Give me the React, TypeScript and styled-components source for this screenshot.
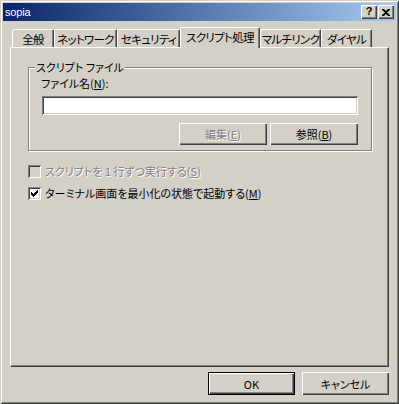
import styled, { createGlobalStyle } from "styled-components"

const GlobalStyle = createGlobalStyle`
  html, body {
    margin: 0;
    padding: 0;
    background: #d4d0c8;
  }
  body {
    font-family: "Noto Sans CJK JP", "Noto Sans", sans-serif;
    font-size: 11px;
    font-feature-settings: "palt";
    color: #000;
  }
  * {
    box-sizing: border-box;
  }
`

const tabs = [
  { label: "全般", width: 42 },
  { label: "ネットワーク", width: 63 },
  { label: "セキュリティ", width: 63 },
  { label: "スクリプト処理", width: 80, active: true },
  { label: "マルチリンク", width: 61 },
  { label: "ダイヤル", width: 51 },
]

const App = () => {
  return (
    <>
      <GlobalStyle />
      <Window>
        <TitleBar>
          <TitleText>sopia</TitleText>
          <TitleButtons>
            <CaptionButton>
              <HelpMark>?</HelpMark>
            </CaptionButton>
            <CaptionButton>
              <svg width="8" height="7" viewBox="0 0 8 7">
                <path d="M0 0h2l2 2 2-2h2v1L5 3.5 8 6v1H6L4 5 2 7H0V6l3-2.5L0 1z" fill="#000" />
              </svg>
            </CaptionButton>
          </TitleButtons>
        </TitleBar>

        <Body>
          <TabStrip>
            {tabs.map((tab) => (
              <Tab key={tab.label} $active={!!tab.active} $width={tab.width}>
                {tab.label}
              </Tab>
            ))}
          </TabStrip>

          <Panel>
            <GroupBox>
              <GroupLegend>スクリプト ファイル</GroupLegend>
              <FieldLabel>
                ファイル名(<U>N</U>):
              </FieldLabel>
              <TextInput />
              <GroupButtons>
                <Button $disabled $width={88}>
                  編集(<U>E</U>)
                </Button>
                <Button $width={88}>
                  参照(<U>B</U>)
                </Button>
              </GroupButtons>
            </GroupBox>

            <Checks>
              <CheckRow $disabled>
                <CheckBox $disabled />
                <span>
                  スクリプトを 1 行ずつ実行する(<U>S</U>)
                </span>
              </CheckRow>
              <CheckRow>
                <CheckBox>
                  <svg width="7" height="7" viewBox="0 0 7 7">
                    <path d="M0 2h1v1h1v1h1V3h1V2h1V1h1V0h1v3H6v1H5v1H4v1H3v1H2V6H1V5H0z" fill="#000" />
                  </svg>
                </CheckBox>
                <span>
                  ターミナル画面を最小化の状態で起動する(<U>M</U>)
                </span>
              </CheckRow>
            </Checks>
          </Panel>

          <Footer>
            <Button $default $width={87} $height={23}>
              OK
            </Button>
            <Button $width={87} $height={23}>
              キャンセル
            </Button>
          </Footer>
        </Body>
      </Window>
    </>
  )
}

export default App

const Window = styled.div`
  width: 399px;
  height: 404px;
  padding: 3px;
  display: flex;
  flex-direction: column;
  background: #d4d0c8;
  box-shadow: inset 1px 1px 0 #d4d0c8, inset -1px -1px 0 #404040, inset 2px 2px 0 #fff,
    inset -2px -2px 0 #808080;
`

const TitleBar = styled.div`
  height: 18px;
  display: flex;
  align-items: center;
  justify-content: space-between;
  padding: 0 2px 0 2px;
  background: linear-gradient(to right, #0a246a, #a6caf0);
`

const TitleText = styled.div`
  font-family: "Liberation Sans", Arial, sans-serif;
  font-size: 11px;
  color: #fff;
  letter-spacing: -0.2px;
`

const TitleButtons = styled.div`
  display: flex;
  gap: 1px;
`

const CaptionButton = styled.div`
  width: 16px;
  height: 14px;
  display: flex;
  align-items: center;
  justify-content: center;
  background: #d4d0c8;
  box-shadow: inset 1px 1px 0 #fff, inset -1px -1px 0 #404040, inset -2px -2px 0 #808080;
`

const HelpMark = styled.span`
  font-family: "Liberation Sans", Arial, sans-serif;
  font-weight: bold;
  font-size: 11px;
  line-height: 11px;
  margin-top: -1px;
`

const Body = styled.div`
  flex: 1;
  display: flex;
  flex-direction: column;
  padding: 6px 7px 0;
`

const TabStrip = styled.div`
  height: 20px;
  display: flex;
  align-items: flex-end;
  padding-left: 2px;
  position: relative;
  z-index: 1;
`

const Tab = styled.div<{ $active: boolean; $width: number }>`
  width: ${(p) => p.$width}px;
  height: ${(p) => (p.$active ? 21 : 18)}px;
  margin-bottom: ${(p) => (p.$active ? -1 : 0)}px;
  display: flex;
  align-items: ${(p) => (p.$active ? "flex-start" : "center")};
  justify-content: center;
  padding-top: ${(p) => (p.$active ? 1 : 0)}px;
  background: #d4d0c8;
  border-left: 1px solid #fff;
  border-top: 1px solid #fff;
  border-right: 1px solid #404040;
  border-top-left-radius: 2px;
  border-top-right-radius: 2px;
  box-shadow: inset -1px 0 0 #808080;
  font-size: 11.5px;
  letter-spacing: -0.7px;
  line-height: 16px;
  white-space: nowrap;
`

const Panel = styled.div`
  height: 320px;
  padding: 19px 17px 0 17px;
  border-left: 1px solid #fff;
  border-top: 1px solid #fff;
  border-right: 1px solid #404040;
  border-bottom: 1px solid #404040;
  box-shadow: inset -1px -1px 0 #808080;
`

const GroupBox = styled.div`
  position: relative;
  width: 344px;
  padding: 9px 13px 5px 12px;
  border: 1px solid #808080;
  box-shadow: 1px 1px 0 #fff, inset 1px 1px 0 #fff;
`

const GroupLegend = styled.div`
  position: absolute;
  top: -8px;
  left: 6px;
  padding: 0 1px;
  line-height: 14px;
  background: #d4d0c8;
  white-space: nowrap;
`

const FieldLabel = styled.div`
  line-height: 13px;
  margin-bottom: 6px;
`

const U = styled.span`
  text-decoration: underline;
  text-underline-offset: 1px;
`

const TextInput = styled.div`
  margin-left: 1px;
  height: 19px;
  background: #fff;
  box-shadow: inset 1px 1px 0 #808080, inset -1px -1px 0 #fff, inset 2px 2px 0 #404040,
    inset -2px -2px 0 #d4d0c8;
`

const GroupButtons = styled.div`
  display: flex;
  justify-content: flex-end;
  gap: 3px;
  margin-top: 8px;
`

const Button = styled.div<{ $disabled?: boolean; $default?: boolean; $width: number; $height?: number }>`
  width: ${(p) => p.$width}px;
  height: ${(p) => p.$height ?? 22}px;
  display: flex;
  align-items: center;
  justify-content: center;
  background: #d4d0c8;
  line-height: 14px;
  color: ${(p) => (p.$disabled ? "#808080" : "#000")};
  text-shadow: ${(p) => (p.$disabled ? "1px 1px 0 #fff" : "none")};
  border: ${(p) => (p.$default ? "1px solid #000" : "none")};
  box-shadow: inset 1px 1px 0 #fff, inset -1px -1px 0 #404040, inset -2px -2px 0 #808080;
`

const Checks = styled.div`
  display: flex;
  flex-direction: column;
  gap: 6px;
  margin-top: 12px;
`

const CheckRow = styled.div<{ $disabled?: boolean }>`
  height: 16px;
  display: flex;
  align-items: center;
  gap: 4px;
  line-height: 14px;
  white-space: nowrap;
  color: ${(p) => (p.$disabled ? "#808080" : "#000")};
  text-shadow: ${(p) => (p.$disabled ? "1px 1px 0 #fff" : "none")};
`

const CheckBox = styled.div<{ $disabled?: boolean }>`
  width: 13px;
  height: 13px;
  flex: none;
  display: flex;
  align-items: center;
  justify-content: center;
  background: ${(p) => (p.$disabled ? "#d4d0c8" : "#fff")};
  box-shadow: inset 1px 1px 0 #808080, inset -1px -1px 0 #fff, inset 2px 2px 0 #404040,
    inset -2px -2px 0 #d4d0c8;
`

const Footer = styled.div`
  display: flex;
  justify-content: flex-end;
  gap: 7px;
  margin-top: 5px;
`
